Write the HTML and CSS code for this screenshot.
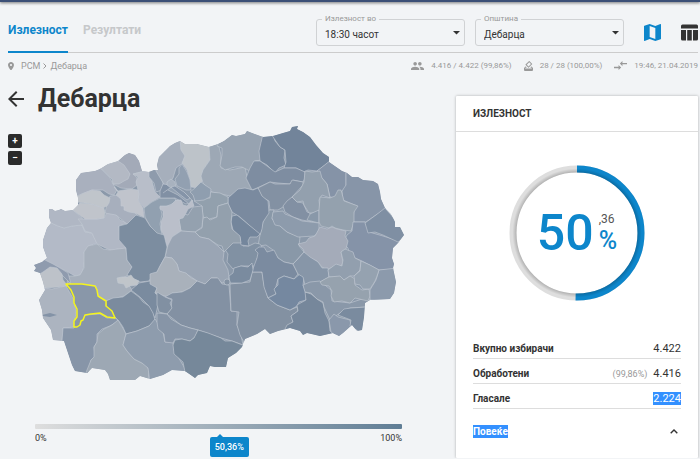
FILE: index.html
```html
<!DOCTYPE html>
<html lang="mk">
<head>
<meta charset="utf-8">
<meta name="viewport" content="width=device-width, initial-scale=1">
<title>Дебарца</title>
<link rel="stylesheet" href="styles.css">
</head>
<body>
<div class="topbar"></div>
<div class="page">
  <header class="header">
    <nav class="tabs">
      <a class="tab tab-active" href="#turnout">Излезност</a>
      <a class="tab" href="#results">Резултати</a>
    </nav>
    <div class="filters">
      <div class="field">
        <label for="time">Излезност во</label>
        <select id="time"><option>18:30 часот</option></select>
        <svg class="caret" viewBox="0 0 8 4"><path d="M0 0h8L4 4z"/></svg>
      </div>
      <div class="field">
        <label for="town">Општина</label>
        <select id="town"><option>Дебарца</option></select>
        <svg class="caret" viewBox="0 0 8 4"><path d="M0 0h8L4 4z"/></svg>
      </div>
      <button class="view view-active" aria-label="Мапа">
        <svg viewBox="3 3 18 18"><path d="M20.500 3l-.16.030L15 5.100 9 3 3.360 4.900c-.21.070-.36.250-.36.480V20.500c0 .28.220.5.500.5l.16-.03L9 18.900l6 2.100 5.640-1.900c.21-.07.360-.25.360-.48V3.500c0-.28-.22-.5-.5-.5zM15 19l-6-2.110V5l6 2.110V19z"/></svg>
      </button>
      <button class="view" aria-label="Табела">
        <svg viewBox="0 0 17 16"><path d="M1.500 0h14A1.500 1.500 0 0 1 17 1.500V4H0V1.500A1.500 1.500 0 0 1 1.500 0zM0 5.500h5V16H1.500A1.500 1.500 0 0 1 0 14.500zM6.200 5.500h4.600V16H6.200zM12 5.500h5v9a1.500 1.500 0 0 1-1.500 1.500H12z"/></svg>
      </button>
    </div>
  </header>

  <div class="meta">
    <nav class="crumbs">
      <svg class="pin" viewBox="5 2 14 20"><path d="M12 2C8.130 2 5 5.130 5 9c0 5.250 7 13 7 13s7-7.750 7-13c0-3.870-3.130-7-7-7zm0 9.500a2.500 2.500 0 1 1 0-5 2.500 2.500 0 0 1 0 5z"/></svg>
      <a href="#rsm">РСМ</a>
      <svg class="sep" viewBox="0 0 4 6"><path d="M.5.5L3 3 .5 5.500"/></svg>
      <span>Дебарца</span>
    </nav>
    <div class="stats">
      <span class="stat"><svg class="people" viewBox="1 5 22 14"><path d="M16 11c1.660 0 2.990-1.340 2.990-3S17.660 5 16 5s-3 1.340-3 3 1.340 3 3 3zm-8 0c1.660 0 2.990-1.340 2.990-3S9.660 5 8 5 5 6.340 5 8s1.340 3 3 3zm0 2c-2.330 0-7 1.170-7 3.500V19h14v-2.500c0-2.330-4.670-3.500-7-3.500zm8 0c-.29 0-.62.020-.97.050 1.160.84 1.970 1.970 1.970 3.450V19h6v-2.500c0-2.330-4.670-3.500-7-3.500z"/></svg>4.416 / 4.422 (99,86%)</span>
      <span class="stat"><svg class="ballot" viewBox="3 2 18 20"><path d="M18 13h-.68l-2 2h1.910L19 17H5l1.780-2h2.050l-2-2H6l-3 3v4a2 2 0 0 0 2 2h14a2 2 0 0 0 2-2v-4l-3-3zm-1-5.050l-4.950 4.950-3.540-3.540 4.950-4.950L17 7.950zm-4.240-5.660L6.390 8.660a1 1 0 0 0 0 1.410l4.950 4.950a1 1 0 0 0 1.410 0l6.360-6.360a1 1 0 0 0 0-1.410L14.160 2.300a1 1 0 0 0-1.400-.01z"/></svg>28 / 28 (100,00%)</span>
      <span class="stat"><svg class="sync" viewBox="2 5 20 14"><path d="M9.010 14H2v2h7.010v3L13 15l-3.990-4v3zm5.980-1v-3H22V8h-7.010V5L11 9l3.990 4z"/></svg>19:46, 21.04.2019</span>
    </div>
  </div>

  <main class="content">
    <section class="left">
      <div class="title">
        <button class="back" aria-label="Назад"><svg viewBox="4 4 16 16"><path d="M20 11H7.830l5.590-5.590L12 4l-8 8 8 8 1.410-1.410L7.830 13H20v-2z"/></svg></button>
        <h1>Дебарца</h1>
      </div>
      <div class="map-area">
        <div class="zoom"><button>+</button><button>−</button></div>
        <svg class="map" viewBox="32 122 372 260" role="img" aria-label="Мапа на општини">
          <defs><clipPath id="country"><path id="border" d="M49 209L52 209 55 211 59 210 61 209 65 211 73 210 78 205 78 198 76 190 76 180 81 173 88 172 95 171 100 169 108 164 118 161 125 155 129 153 135 155 139 161 142 171 149 172 154 170 158 170 157 165 159 157 165 151 170 146 175 143 180 141 185 144 197 144 209 147 218 144 224 141 232 135 236 136 245 134 247 131 252 133 263 137 273 136 283 133 290 131 292 127 298 126 297 129 303 132 310 137 316 145 323 153 329 157 329 162 342 171 347 173 352 177 358 177 363 180 373 181 378 184 380 192 381 199 385 208 391 214 395 222 395 227 400 227 404 235 398 243 393 248 392 258 394 264 393 268 396 282 394 293 390 299 370 300 365 303 364 317 362 330 357 331 352 325 343 333 339 336 333 333 320 336 307 333 303 335 300 331 290 328 278 331 270 334 265 329 257 334 245 339 242 347 236 353 228 358 226 367 215 367 210 366 207 373 198 375 195 378 185 371 172 370 163 375 150 379 140 376 135 380 110 380 108 374 105 370 92 368 87 373 75 371 72 365 64 341 53 340 51 330 43 318 42 310 39 300 45 290 43 282 40 273 34 271 36 268 34 265 42 262 47 258 43 247 43 240 47 228 51 223 49 217Z"/></clipPath></defs>
          <g class="regions" clip-path="url(#country)">
            <use href="#border" fill="#8b99aa"/>
            <path fill="#b3bac7" d="M49 222L58 226 64 228 72 226 82 225 85 232 92 233 97 243 88 246 84 252 85 258 83 270 80 275 75 276 68 272 60 268 44 262 40 240Z"/>
            <path fill="#b0b7c4" d="M46 206L62 207 73 210 82 218 87 225 91 233 85 232 82 225 72 226 64 228 58 226 47 221Z"/>
            <path fill="#b1b8c5" d="M78 219L97 219 104 218 107 212 117 215 120 220 127 223 119 226 120 238 126 248 110 250 97 244 92 233 85 231 82 224Z"/>
            <path fill="#a7afbd" d="M105 213L107 203 110 196 119 195 123 206 133 211 137 215 127 224 121 219 116 215Z"/>
            <path fill="#c0c4cb" d="M73 210L80 203 92 204 104 208 105 213 104 218 97 219 85 219 78 214Z"/>
            <path fill="#a9b0be" d="M74 197L74 180 79 171 100 167 103 171 110 178 113 184 117 190 114 195 109 194 103 190 92 190Z"/>
            <path fill="#c0c5cb" d="M76 197L84 193 92 190 100 191 104 195 110 198 109 203 107 206 103 208 92 204 77 202Z"/>
            <path fill="#a3aab8" d="M118 161L129 150 141 158 145 171 133 174 137 178 137 185 132 189 121 188 113 184 122 181 130 174Z"/>
            <path fill="#b3b9c4" d="M98 167L118 161 124 165 130 174 128 179 124 181 119 184 113 184 112 179 107 174 103 170Z"/>
            <path fill="#b8bec9" d="M133 174L149 170 153 185 155 192 160 197 151 202 144 208 138 200 138 190 136 182 138 177Z"/>
            <path fill="#c0c4cc" d="M114 187L118 191 124 190 131 189 138 190 139 194 138 200 143 208 144 217 141 216 135 213 129 212 124 210 124 206 121 206 121 199 116 195 118 192Z"/>
            <path fill="#8e9bac" d="M149 171L155 168 160 174 163 183 162 190 156 192 154 183 149 177Z"/>
            <path fill="#a6afbc" d="M156 171L154 155 170 141 180 139 181 149 185 155 183 163 176 168 173 178 170 182 165 186 162 181Z"/>
            <path fill="#bdc3c9" d="M180 139L212 143 210 160 203 170 203 180 198 188 191 187 190 180 187 170 182 163 185 156 181 150Z"/>
            <path fill="#9da8b5" d="M209 146L218 143 221 155 221 168 230 170 245 167 247 177 254 190 238 191 230 196 212 192 203 183 201 176 203 170 210 160Z"/>
            <path fill="#97a3b1" d="M219 142L232 132 247 129 263 136 260 150 261 160 255 161 253 167 250 171 242 167 235 167 225 170 220 166 222 155 222 148 217 146Z"/>
            <path fill="#76879c" d="M263 134L273 134 275 141 280 147 285 150 284 158 286 165 279 168 275 173 267 165 260 161 259 151Z"/>
            <path fill="#72849a" d="M271 134L292 122 300 124 325 150 332 160 317 171 308 170 304 172 296 168 284 168 286 162 285 150 280 147Z"/>
            <path fill="#7e8da1" d="M254 161L260 161 267 166 275 172 284 168 296 168 305 172 305 178 303 182 293 180 290 184 278 183 270 182 257 188 252 190 246 178 250 168Z"/>
            <path fill="#8593a7" d="M317 171L331 160 346 172 346 187 339 194 337 198 330 197 327 184 321 177Z"/>
            <path fill="#8391a3" d="M258 188L270 182 275 184 290 184 292 180 303 182 303 185 292 197 283 207 278 210 270 210 269 201 262 197Z"/>
            <path fill="#8290a3" d="M283 206L287 201 292 197 297 202 303 203 307 212 310 213 313 222 302 220 293 217 285 212Z"/>
            <path fill="#93a0ae" d="M305 171L312 172 320 171 322 178 327 184 330 198 322 195 319 200 320 210 313 213 309 213 304 205 303 201 297 202 292 197 300 190 304 182Z"/>
            <path fill="#8998a9" d="M310 214L319 210 319 223 307 220Z"/>
            <path fill="#8795a8" d="M346 170L380 183 387 208 376 215 366 222 353 222 354 210 357 206 343 200 342 191 346 185Z"/>
            <path fill="#94a1ae" d="M320 197L330 198 335 196 338 190 341 190 344 201 358 206 354 212 354 222 351 231 343 230 335 228 332 226 329 228 321 226 319 222 319 210Z"/>
            <path fill="#8593a8" d="M353 222L365 222 369 232 383 236 402 242 396 269 379 270 362 261 355 258 350 256 348 248 343 243 347 235 352 231Z"/>
            <path fill="#7f8fa3" d="M365 223L376 215 385 208 408 235 398 242 383 235 375 232 368 233Z"/>
            <path fill="#8998a8" d="M269 210L274 210 272 219 287 232 300 237 299 246 304 252 293 264 284 262 278 258 273 250 266 245 258 246 260 235 263 222Z"/>
            <path fill="#8d9bac" d="M273 212L283 211 285 214 293 217 302 221 319 223 319 232 314 236 298 237 287 232 280 226 275 225 272 218Z"/>
            <path fill="#a4abb9" d="M320 227L327 229 332 227 337 229 346 231 345 236 348 241 346 249 341 252 343 262 341 266 336 265 327 270 322 267 317 261 306 256 303 249 298 244 306 242 309 238 315 236Z"/>
            <path fill="#7a8a9f" d="M228 198L238 189 245 188 253 190 258 188 262 196 268 201 269 213 263 222 262 229 260 235 250 226 240 217 232 212 228 204Z"/>
            <path fill="#8191a3" d="M224 248L234 241 240 239 243 246 249 246 255 243 260 244 264 250 264 255 257 258 257 266 241 266 233 269 227 262 228 254Z"/>
            <path fill="#74869c" d="M232 216L237 215 249 225 260 234 257 237 250 237 248 241 249 246 241 245 240 237 233 230 231 222Z"/>
            <path fill="#92a0ad" d="M210 192L220 193 228 197 228 203 218 206 217 217 209 219 203 217 202 206 194 201 200 198 210 198Z"/>
            <path fill="#93a0ad" d="M203 218L207 217 210 220 217 217 218 206 228 203 232 212 231 222 232 229 240 236 241 243 233 243 224 252 222 246 218 245 209 239 200 237 195 232 202 228Z"/>
            <path fill="#91a0b0" d="M144 208L152 202 160 198 175 198 176 202 165 207 160 207 162 214 160 224 162 235 165 243 158 237 150 226 145 217Z"/>
            <path fill="#8190a4" d="M160 191L163 184 170 185 180 190 192 201 186 204 175 198 160 198Z"/>
            <path fill="#92a0b1" d="M182 164L187 172 190 180 191 190 186 190 177 186 175 179 179 174 179 168Z"/>
            <path fill="#a8b2bf" d="M167 182L171 179 175 182 176 187 171 188 167 185Z"/>
            <path fill="#92a0b1" d="M163 193L170 188 176 187 186 194 193 201 189 204 178 195 168 190"/>
            <path fill="#8594a8" d="M171 187L175 186 184 192 190 198 187 200 178 193Z"/>
            <path fill="#8f9eaf" d="M190 192L195 188 201 182 205 185 211 189 210 197 204 200 195 201 193 195Z"/>
            <path fill="#94a1af" d="M179 220L184 214 188 215 193 207 202 206 203 216 202 227 195 232 181 231Z"/>
            <path fill="#babfca" d="M160 206L167 206 171 205 176 200 181 200 183 205 187 206 192 200 194 206 188 209 186 213 183 218 179 219 181 231 173 236 171 242 168 247 165 243 165 238 161 230 161 222 163 217 163 211 160 209Z"/>
            <path fill="#9aa5b4" d="M168 245L172 237 181 231 195 232 200 237 209 239 218 246 224 252 223 260 228 270 229 277 228 282 222 283 217 278 211 278 205 284 197 281 190 276 179 271 177 264 172 258 165 257Z"/>
            <path fill="#a6afbb" d="M84 252L88 246 97 244 103 249 110 250 126 248 127 260 132 267 127 276 122 278 130 287 132 290 124 296 105 301 99 298 96 286 67 284 68 276 75 276 80 275 84 268Z"/>
            <path fill="#7c8da0" d="M119 226L127 224 136 215 145 218 150 226 157 233 164 235 167 247 165 257 160 266 157 272 152 276 149 281 140 282 127 275 132 267 127 260 126 248 119 240Z"/>
            <path fill="#7a8b9f" d="M131 290L139 283 150 281 157 288 155 293 160 297 158 305 155 318 148 305 140 297Z"/>
            <path fill="#c0c5ca" d="M117 278L122 277 127 277 131 275 134 279 139 281 137 285 130 286 126 288 124 284 118 283Z"/>
            <path fill="#8f9bae" d="M30 275L30 263 43 259 53 264 60 268 68 273 71 284 62 275 53 270 44 274Z"/>
            <path fill="#bdc2c9" d="M38 275L43 272 50 267 57 268 62 274 63 280 68 286 58 287 45 288Z"/>
            <path fill="#acb4c0" d="M36 300L44 288 52 289 66 286 74 300 76 312 74 327 63 328 62 342 50 342Z"/>
            <path class="plain" fill="#8493a7" d="M42 315L50 313 57 315 50 317 43 316Z"/>
            <path fill="#8795a8" d="M63 328L74 328 85 315 100 314 107 318 116 318 118 321 110 326 102 329 97 334 97 342 94 347 95 357 91 360 88 376 72 373 62 341Z"/>
            <path fill="#9da8b4" d="M118 320L124 330 126 334 123 345 127 351 134 359 146 365 149 370 148 382 105 384 85 375 91 360 94 357 94 347 97 342 98 334 104 329 112 325Z"/>
            <path fill="#7b8b9e" d="M106 301L113 298 123 297 131 291 139 297 143 302 149 306 153 313 155 320 149 326 137 331 126 334 123 327 119 321 115 317 106 306Z"/>
            <path fill="#8e9cad" d="M126 334L137 331 149 326 155 319 157 322 163 332 165 342 173 342 174 350 187 372 172 374 150 382 148 368 142 363 134 359 127 351 123 345Z"/>
            <path fill="#a9b1bb" d="M150 274L153 273 157 272 160 266 165 257 172 258 177 264 179 271 186 273 190 277 197 281 190 288 182 292 172 293 168 297 162 295 155 293 157 288 150 284Z"/>
            <path fill="#8391a3" d="M165 297L172 293 182 292 190 288 197 281 205 284 211 278 218 278 222 284 229 285 231 311 237 311 237 325 241 335 243 345 232 341 221 338 198 330 190 328 181 325 167 314 171 309 172 299Z"/>
            <path fill="#8190a2" d="M157 292L165 297 172 300 170 303 172 308 167 314 159 312 157 305Z"/>
            <path fill="#8795a7" d="M157 313L167 314 171 319 181 325 190 328 198 330 195 337 190 341 182 339 175 339 173 343 165 342 164 334 158 329 157 322Z"/>
            <path fill="#76889a" d="M175 340L182 339 190 341 194 338 198 330 208 333 221 338 225 341 232 341 245 346 230 362 225 372 205 377 195 382 185 372 183 362 174 354 173 345Z"/>
            <path fill="#8391a2" d="M230 284L250 282 252 272 262 272 264 285 268 298 277 305 290 310 297 307 298 311 291 316 293 322 287 326 287 332 270 338 245 344 240 335 237 325 239 312 231 311Z"/>
            <path fill="#7b8ba0" d="M254 266L257 258 258 253 255 250 259 247 264 247 267 252 274 250 278 258 284 262 293 264 298 274 294 279 284 276 278 279 275 290 276 294 268 298 264 287 262 272 252 272Z"/>
            <path fill="#7a8b9f" d="M230 283L229 276 233 273 234 268 241 266 248 267 252 263 253 270 250 280 242 283Z"/>
            <circle cx="227" cy="282" r="3" fill="#8391a2"/>
            <path fill="#7588a0" d="M278 279L284 276 294 279 300 274 304 277 303 285 306 293 306 300 299 302 297 306 290 310 277 305 268 298 276 294 274 289 278 285Z"/>
            <path fill="#76879b" d="M305 292L311 294 317 299 323 303 325 313 329 321 330 331 337 334 320 340 300 338 285 329 287 325 293 322 291 316 298 311 297 305 306 300Z"/>
            <path fill="#8796a8" d="M293 264L298 259 304 252 310 257 318 262 322 268 328 268 329 277 320 282 305 285 303 277 298 274Z"/>
            <path fill="#929fae" d="M341 252L345 249 353 252 355 258 361 261 360 270 354 276 350 276 344 280 340 277 329 277 328 270 336 264 342 266 343 260Z"/>
            <path fill="#8a98a9" d="M303 285L310 282 320 281 331 290 332 301 350 303 362 299 370 300 365 307 350 308 340 313 330 320 324 307 323 302 317 299 311 293 305 292Z"/>
            <path fill="#96a2ae" d="M320 282L325 279 329 277 340 276 344 280 350 276 355 279 355 285 362 290 369 289 370 296 368 301 355 298 350 303 342 301 334 302 331 296 332 291 329 286 322 285Z"/>
            <path fill="#8c9aac" d="M379 270L397 268 400 301 370 300 370 290 376 280Z"/>
            <path fill="#95a2b0" d="M361 261L370 265 379 270 377 276 375 281 370 289 363 289 360 285 355 284 354 276 360 271Z"/>
            <path fill="#8a98ab" d="M329 320L334 314 338 317 350 320 351 326 340 339 331 332Z"/>
            <path fill="#7a8b9f" d="M338 315L344 309 351 308 367 307 363 334 350 326 351 320Z"/>
          </g>
          <path class="selected" d="M66 284L82 284 95 286 97 290 98 296 106 301 106 306 112 311 115 318 107 317 100 313 91 314 85 315 83 320 81 321 80 325 77 327 74 327 74 321 77 317 77 309 74 303 74 297 71 290Z"/>
        </svg>
        <div class="scale">
          <div class="scale-bar"></div>
          <div class="scale-labels"><span>0%</span><span>100%</span></div>
          <div class="marker" style="left:50.36%">50,36%</div>
        </div>
      </div>
    </section>

    <section class="card">
      <h2>ИЗЛЕЗНОСТ</h2>
      <div class="ring">
        <svg viewBox="0 0 136 136">
          <defs><radialGradient id="shade" gradientUnits="userSpaceOnUse" cx="68" cy="68" r="68"><stop offset=".89" stop-opacity=".2"/><stop offset=".95" stop-opacity="0"/></radialGradient></defs>
          <circle class="ring-track" cx="68" cy="68" r="64"/>
          <circle class="ring-value" cx="68" cy="68" r="64" pathLength="100" stroke-dasharray="50.36 100" transform="rotate(-90 68 68)"/>
          <circle class="ring-shade" cx="68" cy="68" r="64"/>
        </svg>
        <div class="percent">
          <span class="whole">50</span>
          <span class="part"><span class="decimal">,36</span><span class="sign">%</span></span>
        </div>
      </div>
      <table class="figures">
        <tr><th scope="row">Вкупно избирачи</th><td>4.422</td></tr>
        <tr><th scope="row">Обработени</th><td><small>(99,86%)</small>4.416</td></tr>
        <tr><th scope="row">Гласале</th><td><mark>2.224</mark></td></tr>
      </table>
      <button class="more"><mark>Повеќе</mark><svg viewBox="0 0 8 5"><path d="M.7 4.300L4 1l3.300 3.300"/></svg></button>
    </section>
  </main>
</div>
</body>
</html>
```
FILE: styles.css
```css
* { box-sizing: border-box; }

body {
  margin: 0;
  background: #f2f4f6;
  color: #333;
  font: 11px/16px Roboto, "Noto Sans", sans-serif;
}

button {
  padding: 0;
  border: 0;
  background: none;
  color: inherit;
  font: inherit;
}

a { color: inherit; text-decoration: none; }
svg { display: block; fill: currentColor; }

.topbar {
  height: 2px;
  background: #3c5077;
  box-shadow: 0 1px 3px rgba(0, 0, 0, .6);
}

.page { padding: 0 2px 0 8px; }

.header {
  display: flex;
  justify-content: space-between;
  height: 51px;
  border-bottom: 1px solid #ccc;
}

.tabs { display: flex; gap: 15px; }

.tab {
  height: 51px;
  padding-top: 20px;
  color: #c6c8ca;
  font-size: 12px;
  font-weight: 700;
}

.tab-active {
  border-bottom: 2px solid #0d86cb;
  color: #0d86cb;
}

.filters {
  display: flex;
  align-items: flex-start;
  gap: 10px;
  padding-top: 17px;
}

.field { position: relative; width: 149px; }

.field label {
  position: absolute;
  top: -5px;
  left: 6px;
  padding: 0 3px;
  background: #f2f4f6;
  color: #999;
  font-size: 8px;
  line-height: 9px;
}

.field select {
  display: block;
  width: 100%;
  height: 27px;
  padding: 4px 8px 0;
  border: 1px solid #d0d2d4;
  border-radius: 3px;
  appearance: none;
  background: none;
  color: #333;
  font: 10px Roboto, "Noto Sans", sans-serif;
}

.caret {
  position: absolute;
  top: 12px;
  right: 5px;
  width: 7px;
  pointer-events: none;
}

.view { margin: 5px 0 0 10px; }
.view svg { width: 17px; height: 17px; }
.view-active { color: #0d86cb; }

.meta {
  display: flex;
  justify-content: space-between;
  padding-top: 5px;
  color: #999;
  font-size: 9px;
}

.crumbs, .stats, .stat { display: flex; align-items: center; }
.crumbs { gap: 3px; }
.stats { gap: 12px; font-size: 8px; }
.stat { gap: 7px; }
.pin { width: 6px; margin-right: 4px; }
.sep { width: 4px; fill: none; stroke: currentColor; }
.people { width: 13px; }
.ballot { width: 9px; }
.sync { width: 13px; }

.content {
  display: grid;
  grid-template-columns: 1fr 242px;
  padding-top: 22px;
}

.left { margin-top: -14px; }

.title {
  display: flex;
  align-items: center;
  gap: 14px;
  height: 32px;
  padding-top: 2px;
}

.title h1 {
  margin: 0;
  font-size: 25px;
  line-height: 30px;
}

.back svg { width: 16px; height: 16px; }

.map-area {
  position: relative;
  padding: 8px 52px 0 24px;
}

.map { width: 100%; overflow: visible; }

.regions path, .regions circle { stroke: #c3cad3; stroke-width: .6; stroke-linejoin: round; }
.regions .plain { stroke: none; }
.selected { fill: #8997a9; stroke: #f5f51c; stroke-width: 1.5; stroke-linejoin: round; }

.zoom {
  position: absolute;
  top: 20px;
  left: 0;
  display: grid;
  gap: 3px;
}

.zoom button {
  width: 14px;
  height: 14px;
  border-radius: 2px;
  background: #2b2b2b;
  color: #fff;
  font-size: 10px;
  font-weight: 700;
  line-height: 14px;
}

.scale { position: relative; margin: 42px 2px 0 3px; }

.scale-bar {
  height: 5px;
  border-radius: 1px;
  background: linear-gradient(90deg, #dedede, #5f7d95);
}

.scale-labels {
  display: flex;
  justify-content: space-between;
  padding-top: 1px;
  font-size: 9px;
}

.marker {
  position: absolute;
  top: 13px;
  width: 39px;
  margin-left: -10px;
  border-radius: 2px;
  background: #0d86cb;
  color: #fff;
  font-size: 9px;
  font-weight: 500;
  line-height: 20px;
  text-align: center;
}

.marker::before {
  content: "";
  position: absolute;
  top: -3px;
  left: 7px;
  border: 3px solid transparent;
  border-top: 0;
  border-bottom-color: #0d86cb;
}

.card {
  align-self: start;
  background: #fff;
  border-radius: 1px;
  box-shadow: 0 0 3px rgba(0, 0, 0, .3);
}

.card h2 {
  margin: 0;
  padding: 10px 17px 9px;
  border-bottom: 1px solid #ddd;
  font-size: 10px;
  font-weight: 700;
  line-height: 16px;
}

.ring {
  position: relative;
  width: 136px;
  margin: 33px auto;
}

.ring circle { fill: none; stroke-width: 7; }
.ring .ring-track { stroke: #dedede; }
.ring .ring-value { stroke: #0d86cb; }
.ring .ring-shade { stroke: url(#shade); }

.percent {
  position: absolute;
  inset: 0;
  display: flex;
  align-items: center;
  justify-content: center;
  gap: 5px;
  color: #0d86cb;
  font-weight: 500;
}

.whole { font-size: 50px; line-height: 52px; }
.part { display: grid; }
.decimal { color: #555; font-size: 12px; font-weight: 400; line-height: 14px; }
.sign { font-size: 25px; line-height: 29px; }

.figures {
  width: calc(100% - 34px);
  margin: 0 17px;
  border-collapse: collapse;
}

.figures th, .figures td {
  height: 24px;
  padding: 7px 0 1px;
  border-bottom: 1px solid #ddd;
}

.figures th { font-size: 10px; font-weight: 700; text-align: left; }
.figures td { font-size: 11px; text-align: right; }
.figures small { margin-right: 6px; color: #999; font-size: 9px; }

mark { background: #3390ff; color: #fff; }

.more {
  display: flex;
  align-items: center;
  justify-content: space-between;
  width: 100%;
  padding: 16px 20px 20px 17px;
  font-size: 10px;
  font-weight: 700;
}

.more mark { line-height: 13px; }
.more svg { width: 8px; fill: none; stroke: #333; stroke-width: 1.4; }
```
